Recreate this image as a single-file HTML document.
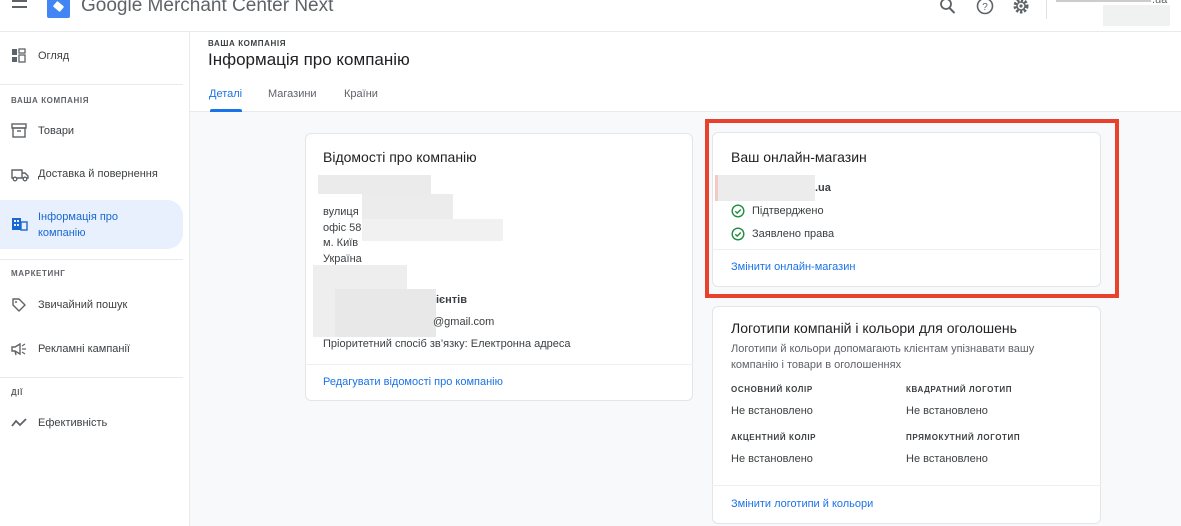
<!DOCTYPE html>
<html><head><meta charset="utf-8"><style>
*{box-sizing:border-box;margin:0;padding:0}
body{width:1181px;height:526px;overflow:hidden;font-family:"Liberation Sans",Arial,sans-serif;background:#fff;color:#202124;position:relative}
.a{position:absolute}
.t{font-size:11px;color:#3c4043}
.cap{font-size:8.5px;letter-spacing:.6px;color:#5f6368;font-weight:bold}
.card{position:absolute;background:#fff;border:1px solid #e3e5e8;border-radius:6px}
.link{color:#1a73e8;font-size:11px}
.blur{position:absolute;background:#e6e7e8}
.nav{position:absolute;left:38px;font-size:11px;color:#3c4043}
.ic{position:absolute;left:11px}
</style></head><body>
<!-- header -->
<div class="a" style="left:0;top:31px;width:1181px;height:1px;background:#e8eaed"></div>
<div class="a" style="left:12px;top:0;width:15px;height:2px;background:#5f6368"></div>
<div class="a" style="left:12px;top:6px;width:15px;height:2px;background:#5f6368"></div>
<div class="a" style="left:12px;top:12px;width:15px;height:2px;background:#5f6368;display:none"></div>
<div class="a" style="left:47px;top:0;width:23px;height:18px;background:#4285f4;border-radius:0 0 2px 2px"></div>
<div class="a" style="left:54px;top:3px;width:9px;height:7px;background:#fff;transform:rotate(40deg);border-radius:1px"></div>
<div class="a" style="left:81px;top:-5px;font-size:19px;color:#5f6368">Google Merchant Center Next</div>
<svg class="a" style="left:939px;top:0" width="18" height="14"><circle cx="7" cy="4" r="5" fill="none" stroke="#5f6368" stroke-width="1.8"/><path d="M10.5 8l5 5" stroke="#5f6368" stroke-width="2"/></svg>
<svg class="a" style="left:976px;top:0" width="18" height="16"><circle cx="9" cy="6" r="7.5" fill="none" stroke="#5f6368" stroke-width="1.6"/><text x="9" y="10" font-size="10" text-anchor="middle" fill="#5f6368" font-family="Liberation Sans">?</text></svg>
<svg class="a" style="left:1012px;top:0" width="18" height="16"><circle cx="9" cy="6" r="6" fill="none" stroke="#5f6368" stroke-width="3" stroke-dasharray="2.4 1.6"/><circle cx="9" cy="6" r="4" fill="none" stroke="#5f6368" stroke-width="1.5"/><circle cx="9" cy="6" r="1.6" fill="#5f6368"/></svg>
<div class="a" style="left:1046px;top:0;width:1px;height:19px;background:#e0e0e0"></div>
<div class="a" style="left:1056px;top:0;width:95px;height:2px;background:#ccc"></div>
<div class="a" style="left:1152px;top:-6px;font-size:11px;color:#5f6368">.ua</div>
<div class="blur" style="left:1103px;top:5px;width:67px;height:21px;background:#f0f1f1"></div>
<!-- sidebar -->
<div class="a" style="left:189px;top:32px;width:1px;height:494px;background:#e8eaed"></div>
<svg class="ic" style="top:48px" width="16" height="16"><rect x="1" y="1" width="5" height="6" fill="#5f6368"/><rect x="8" y="1" width="6" height="4" fill="none" stroke="#5f6368" stroke-width="1.3"/><rect x="1" y="9" width="5" height="5" fill="#5f6368"/><rect x="8" y="7" width="6" height="7" fill="none" stroke="#5f6368" stroke-width="1.3"/></svg>
<div class="nav" style="top:50px">Огляд</div>
<div class="a" style="left:0;top:84px;width:183px;height:1px;background:#e8eaed"></div>
<div class="a cap" style="left:11px;top:96px;font-size:8px">ВАША КОМПАНІЯ</div>
<svg class="ic" style="top:123px" width="16" height="16"><rect x="1" y="1" width="14" height="4" fill="none" stroke="#5f6368" stroke-width="1.4"/><rect x="2" y="5" width="12" height="9" fill="none" stroke="#5f6368" stroke-width="1.4"/><path d="M6 8h4" stroke="#5f6368" stroke-width="1.4"/></svg>
<div class="nav" style="top:125px">Товари</div>
<svg class="ic" style="top:167px" width="18" height="16"><path d="M1 3h10v8H1z M11 6h3l3 3v2h-6" fill="none" stroke="#5f6368" stroke-width="1.4"/><circle cx="4" cy="12" r="1.8" fill="#fff" stroke="#5f6368" stroke-width="1.3"/><circle cx="14" cy="12" r="1.8" fill="#fff" stroke="#5f6368" stroke-width="1.3"/></svg>
<div class="nav" style="top:168px">Доставка й повернення</div>
<div class="a" style="left:0;top:200px;width:183px;height:49px;background:#e8f0fe;border-radius:0 16px 16px 0"></div>
<svg class="ic" style="top:216px" width="17" height="16"><rect x="1" y="2" width="9" height="12" fill="#1967d2"/><rect x="10" y="6" width="6" height="8" fill="none" stroke="#1967d2" stroke-width="1.4"/><g fill="#e8f0fe"><rect x="3" y="4" width="2" height="2"/><rect x="6" y="4" width="2" height="2"/><rect x="3" y="8" width="2" height="2"/><rect x="6" y="8" width="2" height="2"/></g></svg>
<div class="nav" style="top:209px;color:#1967d2;line-height:16px">Інформація про<br>компанію</div>
<div class="a" style="left:0;top:259px;width:183px;height:1px;background:#e8eaed"></div>
<div class="a cap" style="left:11px;top:269px;font-size:8px">МАРКЕТИНГ</div>
<svg class="ic" style="top:297px" width="16" height="16"><path d="M2 2h6l6 6-6 6-6-6z" fill="none" stroke="#5f6368" stroke-width="1.4" stroke-linejoin="round"/><circle cx="5" cy="5" r="1" fill="#5f6368"/></svg>
<div class="nav" style="top:299px">Звичайний пошук</div>
<svg class="ic" style="top:341px" width="16" height="16"><path d="M1 6h3l5-3v10L4 10H1z M4 10l1 4" fill="none" stroke="#5f6368" stroke-width="1.4"/><path d="M11 5l3-2M11 8h4M11 11l3 2" stroke="#5f6368" stroke-width="1.2"/></svg>
<div class="nav" style="top:343px">Рекламні кампанії</div>
<div class="a" style="left:0;top:377px;width:183px;height:1px;background:#e8eaed"></div>
<div class="a cap" style="left:11px;top:388px;font-size:8px">ДІЇ</div>
<svg class="ic" style="top:415px" width="18" height="16"><path d="M1 11l4-5 4 4 6-6" fill="none" stroke="#5f6368" stroke-width="1.8"/></svg>
<div class="nav" style="top:417px">Ефективність</div>
<!-- content -->
<div class="a" style="left:190px;top:112px;width:991px;height:414px;background:#f8f9fa"></div>
<div class="a" style="left:190px;top:111px;width:991px;height:1px;background:#e8eaed"></div>
<div class="a cap" style="left:208px;top:39px;font-size:8px;color:#3c4043">ВАША КОМПАНІЯ</div>
<div class="a" style="left:208px;top:50px;font-size:17px;color:#202124">Інформація про компанію</div>
<div class="a" style="left:209px;top:88px;font-size:11px;color:#1a73e8">Деталі</div>
<div class="a" style="left:210px;top:109px;width:32px;height:3px;background:#1a73e8;border-radius:2px 2px 0 0"></div>
<div class="a" style="left:268px;top:88px;font-size:11px;color:#5f6368">Магазини</div>
<div class="a" style="left:344px;top:88px;font-size:11px;color:#5f6368">Країни</div>
<!-- card1 -->
<div class="card" style="left:305px;top:133px;width:388px;height:268px"></div>
<div class="a" style="left:323px;top:149px;font-size:14px">Відомості про компанію</div>
<div class="blur" style="left:318px;top:175px;width:113px;height:19px;background:#ebebec"></div>
<div class="blur" style="left:362px;top:194px;width:91px;height:25px;background:#ececed"></div>
<div class="blur" style="left:362px;top:219px;width:141px;height:22px;background:#f1f1f2"></div>
<div class="t a" style="left:323px;top:205px;line-height:15.5px">вулиця<br>офіс 58<br>м. Київ<br>Україна</div>
<div class="blur" style="left:313px;top:265px;width:94px;height:72px;background:#eeeeef"></div>
<div class="blur" style="left:335px;top:289px;width:101px;height:48px;background:#e8e8e9"></div>
<div class="a t" style="left:436px;top:294px;font-weight:bold;color:#3c4043">ієнтів</div>
<div class="a t" style="left:433px;top:316px">@gmail.com</div>
<div class="a t" style="left:323px;top:338px">Пріоритетний спосіб зв’язку: Електронна адреса</div>
<div class="a" style="left:305px;top:364px;width:388px;height:1px;background:#eeeff0"></div>
<div class="a link" style="left:323px;top:376px">Редагувати відомості про компанію</div>
<!-- card2 -->
<div class="a" style="left:705px;top:119px;width:414px;height:179px;border:4px solid #e8412c"></div>
<div class="card" style="left:712px;top:132px;width:389px;height:155px"></div>
<div class="a" style="left:731px;top:149px;font-size:14px">Ваш онлайн-магазин</div>
<div class="blur" style="left:715px;top:175px;width:100px;height:26px;background:#ececed"></div>
<div class="blur" style="left:715px;top:175px;width:3px;height:26px;background:#f3c9c4"></div>
<div class="a t" style="left:815px;top:182px;font-weight:bold">.ua</div>
<svg class="a" style="left:731px;top:204px" width="14" height="14"><circle cx="7" cy="7" r="5.8" fill="none" stroke="#1e8e3e" stroke-width="1.4"/><path d="M4.3 7.2l1.9 1.9 3.6-3.6" fill="none" stroke="#1e8e3e" stroke-width="1.4"/></svg>
<div class="a t" style="left:752px;top:205px">Підтверджено</div>
<svg class="a" style="left:731px;top:227px" width="14" height="14"><circle cx="7" cy="7" r="5.8" fill="none" stroke="#1e8e3e" stroke-width="1.4"/><path d="M4.3 7.2l1.9 1.9 3.6-3.6" fill="none" stroke="#1e8e3e" stroke-width="1.4"/></svg>
<div class="a t" style="left:752px;top:228px">Заявлено права</div>
<div class="a" style="left:712px;top:249px;width:389px;height:1px;background:#eeeff0"></div>
<div class="a link" style="left:731px;top:261px">Змінити онлайн-магазин</div>
<!-- card3 -->
<div class="card" style="left:712px;top:306px;width:389px;height:218px"></div>
<div class="a" style="left:731px;top:320px;font-size:14px">Логотипи компаній і кольори для оголошень</div>
<div class="a t" style="left:731px;top:342px;color:#5f6368;line-height:15.5px">Логотипи й кольори допомагають клієнтам упізнавати вашу<br>компанію і товари в оголошеннях</div>
<div class="a cap" style="left:731px;top:385px;font-size:8px;color:#3c4043">ОСНОВНИЙ КОЛІР</div>
<div class="a cap" style="left:906px;top:385px;font-size:8px;color:#3c4043">КВАДРАТНИЙ ЛОГОТИП</div>
<div class="a t" style="left:731px;top:405px">Не встановлено</div>
<div class="a t" style="left:906px;top:405px">Не встановлено</div>
<div class="a cap" style="left:731px;top:433px;font-size:8px;color:#3c4043">АКЦЕНТНИЙ КОЛІР</div>
<div class="a cap" style="left:906px;top:433px;font-size:8px;color:#3c4043">ПРЯМОКУТНИЙ ЛОГОТИП</div>
<div class="a t" style="left:731px;top:453px">Не встановлено</div>
<div class="a t" style="left:906px;top:453px">Не встановлено</div>
<div class="a" style="left:712px;top:485px;width:389px;height:1px;background:#eeeff0"></div>
<div class="a link" style="left:731px;top:498px">Змінити логотипи й кольори</div>
</body></html>
